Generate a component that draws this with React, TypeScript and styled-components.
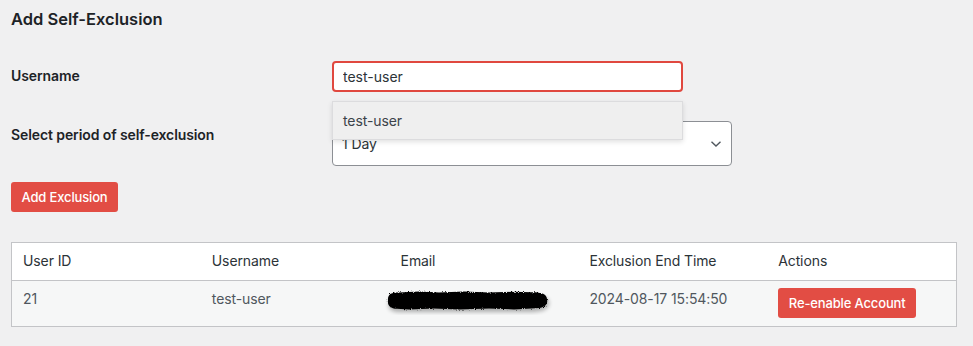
import React from "react";
import styled, { createGlobalStyle } from "styled-components";

const GlobalStyle = createGlobalStyle`
  body {
    margin: 0;
    background: #f0f0f1;
    font-family: Inter, "Noto Sans", sans-serif;
    color: #1d2327;
    letter-spacing: -0.1px;
  }
`;

const Page = styled.div`
  padding: 8px 16px 0 11px;
`;

const Title = styled.h2`
  margin: 0;
  font-size: 16.5px;
  font-weight: 600;
  line-height: 23px;
  letter-spacing: 0;
  color: #1d2327;
`;

const FormGrid = styled.div`
  display: grid;
  grid-template-columns: 321px 1fr;
  row-gap: 29px;
  margin-top: 30px;
`;

const Label = styled.label<{ $top?: number }>`
  font-size: 14px;
  font-weight: 600;
  line-height: 20px;
  align-self: ${(p) => (p.$top !== undefined ? "start" : "center")};
  padding-top: ${(p) => p.$top ?? 0}px;
  margin-top: ${(p) => (p.$top !== undefined ? 0 : -2)}px;
`;

const Field = styled.div`
  position: relative;
`;

const TextInput = styled.input`
  box-sizing: border-box;
  width: 351px;
  height: 31px;
  border: 2px solid #e0483f;
  border-radius: 4px;
  padding: 0 9px;
  font: inherit;
  font-size: 14px;
  color: #2c3338;
  background: #fff;
  outline: none;
  caret-color: #1d2327;
`;

const Suggestions = styled.div`
  position: absolute;
  left: 0;
  top: 40px;
  z-index: 2;
  box-sizing: border-box;
  width: 351px;
  height: 39px;
  display: flex;
  align-items: center;
  padding: 0 10px;
  background: #efefef;
  border: 1px solid #dcdcde;
  box-shadow: 0 2px 5px rgba(0, 0, 0, 0.12);
  font-size: 14px;
  color: #3c434a;
`;

const SelectBox = styled.div`
  box-sizing: border-box;
  width: 400px;
  height: 45px;
  border: 1px solid #8c8f94;
  border-radius: 4px;
  background: #fff;
  display: flex;
  align-items: center;
  justify-content: space-between;
  padding: 0 9px;
  font-size: 14px;
  color: #2c3338;
`;

const RedButton = styled.button<{ $w: number }>`
  box-sizing: border-box;
  width: ${(p) => p.$w}px;
  height: 30px;
  border: 0;
  border-radius: 3px;
  background: #e24d44;
  color: #fff;
  font: inherit;
  font-size: 13px;
  font-weight: 500;
  letter-spacing: -0.15px;
  padding: 0;
  cursor: pointer;
`;

const ButtonRow = styled.div`
  margin-top: 16px;
`;

const Table = styled.div`
  margin-top: 30px;
  width: 946px;
  box-sizing: border-box;
  border: 1px solid #c3c4c7;
  background: #fff;
`;

const Row = styled.div<{ $alt?: boolean }>`
  display: grid;
  grid-template-columns: repeat(5, 1fr);
  height: ${(p) => (p.$alt ? 46 : 37)}px;
  background: ${(p) => (p.$alt ? "#f6f7f7" : "#fff")};
  border-top: ${(p) => (p.$alt ? "1px solid #c3c4c7" : "0")};
  box-sizing: border-box;
`;

const Cell = styled.div<{ $head?: boolean }>`
  padding: 8px 11px;
  font-size: 14px;
  line-height: 20px;
  color: ${(p) => (p.$head ? "#2c3338" : "#50575e")};
`;

const ButtonCell = styled.div`
  padding: 7px 11px;
`;

const Chevron = () => (
  <svg width="12" height="8" viewBox="0 0 12 8" fill="none">
    <path d="M1.5 1.8 L6 6 L10.5 1.8" stroke="#50575e" strokeWidth="1.4" />
  </svg>
);

const Redacted = () => (
  <svg width="176" height="28" viewBox="0 0 176 28" style={{ marginLeft: -22, marginTop: -2 }}>
    <defs>
      <filter id="smear" x="-10%" y="-40%" width="120%" height="180%">
        <feTurbulence type="fractalNoise" baseFrequency="0.9" numOctaves="2" result="noise" />
        <feDisplacementMap in="SourceGraphic" in2="noise" scale="3" />
      </filter>
      <filter id="shadow" x="-10%" y="-40%" width="120%" height="180%">
        <feGaussianBlur stdDeviation="2" />
      </filter>
    </defs>
    <path
      d="M10 14 C10 8 14 6 22 6 L150 6 C162 6 170 8 170 14 C170 21 162 23 150 23 L22 23 C14 23 8 21 10 14 Z"
      fill="#000"
      opacity="0.3"
      filter="url(#shadow)"
      transform="translate(0 2)"
    />
    <path
      d="M9 12 C9 7 13 5 20 5.5 L40 4.6 L60 5.4 L85 4.5 L110 5.6 L135 4.8 L152 5.2 C162 5 168 7 168 12 C169 16 167 20 160 21 L135 22.4 L110 21.5 L80 22.6 L55 21.6 L30 22.5 L18 21.8 C11 21.5 8 18 9 12 Z"
      fill="#000"
      filter="url(#smear)"
    />
  </svg>
);

export default function App() {
  return (
    <Page>
      <GlobalStyle />
      <Title>Add Self-Exclusion</Title>
      <FormGrid>
        <Label>Username</Label>
        <Field>
          <TextInput defaultValue="test-user" autoFocus />
          <Suggestions>test-user</Suggestions>
        </Field>
        <Label $top={4}>Select period of self-exclusion</Label>
        <SelectBox>
          <span>1 Day</span>
          <Chevron />
        </SelectBox>
      </FormGrid>
      <ButtonRow>
        <RedButton $w={107}>Add Exclusion</RedButton>
      </ButtonRow>
      <Table>
        <Row>
          <Cell $head>User ID</Cell>
          <Cell $head>Username</Cell>
          <Cell $head>Email</Cell>
          <Cell $head>Exclusion End Time</Cell>
          <Cell $head>Actions</Cell>
        </Row>
        <Row $alt>
          <Cell>21</Cell>
          <Cell>test-user</Cell>
          <Cell>
            <Redacted />
          </Cell>
          <Cell>2024-08-17 15:54:50</Cell>
          <ButtonCell>
            <RedButton $w={138}>Re-enable Account</RedButton>
          </ButtonCell>
        </Row>
      </Table>
    </Page>
  );
}
